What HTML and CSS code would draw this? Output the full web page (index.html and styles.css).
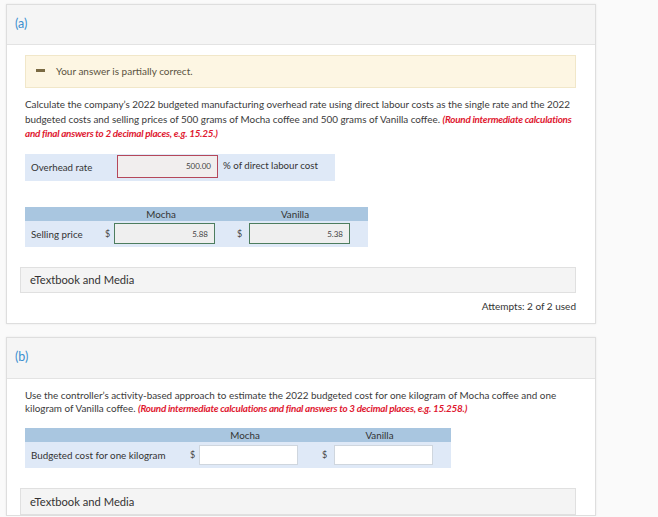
FILE: index.html
```html
<!DOCTYPE html>
<html>
<head>
<meta charset="utf-8">
<link rel="stylesheet" href="styles.css">
</head>
<body>
<div class="page">
  <section class="card">
    <div class="card-head"><span class="part">(a)</span></div>
    <div class="card-body">
      <div class="alert"><span class="minus"></span><span class="alert-text">Your answer is partially correct.</span></div>
      <p class="question">Calculate the company’s 2022 budgeted manufacturing overhead rate using direct labour costs as the single rate and the 2022 budgeted costs and selling prices of 500 grams of Mocha coffee and 500 grams of Vanilla coffee. <em class="note">(Round intermediate calculations and final answers to 2 decimal places, e.g. 15.25.)</em></p>
      <div class="rate-row">
        <span class="rate-label">Overhead rate</span>
        <span class="field field-wrong">500.00</span>
        <span class="rate-unit">% of direct labour cost</span>
      </div>
      <div class="grid grid-a">
        <div class="gh"></div>
        <div class="gh">Mocha</div>
        <div class="gh">Vanilla</div>
        <div class="gc label">Selling price</div>
        <div class="gc group g1"><span class="cur">$</span><span class="field field-ok">5.88</span></div>
        <div class="gc group g2"><span class="cur">$</span><span class="field field-ok">5.38</span></div>
      </div>
      <div class="media">eTextbook and Media</div>
      <div class="attempts">Attempts: 2 of 2 used</div>
    </div>
  </section>
  <section class="card card-b">
    <div class="card-head"><span class="part">(b)</span></div>
    <div class="card-body">
      <p class="question q-b">Use the controller’s activity-based approach to estimate the 2022 budgeted cost for one kilogram of Mocha coffee and one kilogram of Vanilla coffee. <em class="note">(Round intermediate calculations and final answers to 3 decimal places, e.g. 15.258.)</em></p>
      <div class="grid grid-b">
        <div class="gh"></div>
        <div class="gh">Mocha</div>
        <div class="gh">Vanilla</div>
        <div class="gc label">Budgeted cost for one kilogram</div>
        <div class="gc group g1"><span class="cur">$</span><span class="field field-empty"></span></div>
        <div class="gc group g2"><span class="cur">$</span><span class="field field-empty"></span></div>
      </div>
      <div class="media media-b">eTextbook and Media</div>
    </div>
  </section>
</div>
</body>
</html>
```

FILE: styles.css
```css
html, body {
  margin: 0;
  padding: 0;
}
body {
  background: #fafafa;
  font-family: Lato, "Open Sans", sans-serif;
  color: #333;
}
.page {
  padding: 4px 0 0 6px;
  width: 590px;
}
.card {
  background: #fff;
  border: 1px solid #dedede;
  box-shadow: 0 0 2px rgba(0,0,0,0.08);
}
.card-b {
  margin-top: 13px;
}
.card-head {
  height: 39px;
  background: #f5f5f5;
  border-bottom: 1px solid #e3e3e3;
  padding-left: 8px;
  display: flex;
  align-items: center;
}
.part {
  font-size: 12.5px;
  color: #3b8fd0;
  margin-top: -3px;
}
.card-b .card-head {
  height: 40px;
}
.card-body {
  padding: 10px 19px 0 18px;
}
.alert {
  height: 31px;
  background: #fdf6e3;
  border: 1px solid #f1e7c9;
  display: flex;
  align-items: center;
  padding-left: 10px;
}
.minus {
  width: 9px;
  height: 3px;
  background: #7a6a42;
  margin-top: -3px;
}
.alert-text {
  font-size: 10px;
  color: #5a523e;
  margin-left: 11px;
  margin-top: -1px;
}
.question {
  margin: 9px 0 0 0;
  font-size: 9.9px;
  line-height: 14.5px;
  color: #3a3a3a;
}
.q-b {
  margin-top: 0;
  line-height: 13.5px;
}
.note {
  color: #e0172f;
  font-weight: bold;
  font-style: italic;
  letter-spacing: -0.25px;
}
.rate-row {
  margin-top: 13px;
  width: 310px;
  height: 27px;
  background: #dfe9f7;
  display: flex;
  align-items: center;
  font-size: 9.7px;
}
.rate-label {
  width: 86px;
  padding-left: 6px;
}
.rate-unit {
  margin-left: 5px;
  margin-top: -4px;
}
.field {
  box-sizing: border-box;
  display: flex;
  align-items: center;
  justify-content: flex-end;
  padding-right: 6px;
  font-size: 8px;
  color: #444;
}
.field-wrong {
  width: 101px;
  height: 23px;
  border: 1px solid #b5475a;
  background: #f1eeee;
  margin-top: -2px;
}
.field-ok {
  width: 101px;
  height: 21px;
  border: 1px solid #4d7d5e;
  background: #efefef;
}
.field-empty {
  width: 99px;
  height: 20px;
  border: 1px solid #cfd6de;
  background: #fff;
}
.grid {
  display: grid;
  margin-top: 26px;
  font-size: 9.8px;
}
.grid-a {
  grid-template-columns: 75px 122px 146px;
  width: 343px;
}
.grid-b {
  grid-template-columns: 157px 126px 143px;
  width: 426px;
  margin-top: 12px;
}
.gh {
  height: 14px;
  background: #a9c6e0;
  text-align: center;
  line-height: 14px;
  color: #333;
}
.gc {
  height: 26px;
  background: #dfe9f7;
  display: flex;
  align-items: center;
}
.label {
  padding-left: 6px;
}
.cur {
  font-size: 9px;
  color: #444;
}
.grid-a .g1 { padding-left: 5px; }
.grid-a .g1 .cur { width: 9px; }
.grid-a .g2 { padding-left: 15px; }
.grid-a .g2 .cur { width: 12px; }
.grid-b .g1 { padding-left: 8px; }
.grid-b .g1 .cur { width: 9px; }
.grid-b .g2 { padding-left: 14px; }
.grid-b .g2 .cur { width: 12px; }
.media {
  margin-top: 20px;
  height: 24px;
  background: #f4f4f4;
  border: 1px solid #e0e0e0;
  display: flex;
  align-items: center;
  padding-left: 9px;
  font-size: 11.2px;
  color: #333;
  margin-left: -5px;
}
.media-b {
  height: 25px;
}
.attempts {
  text-align: right;
  font-size: 10px;
  color: #333;
  margin-top: 7px;
  padding-bottom: 11px;
  line-height: 12px;
}
```
